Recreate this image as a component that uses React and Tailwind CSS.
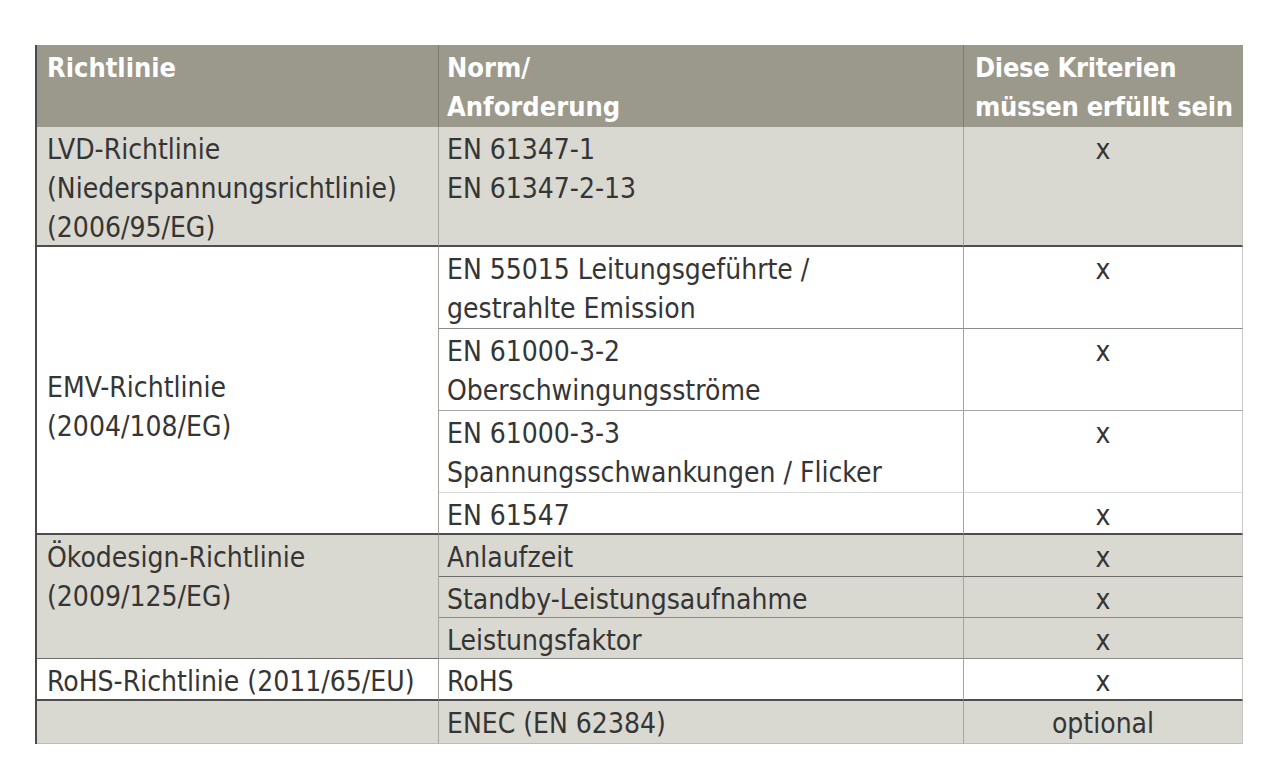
const font = { fontFamily: '"Liberation Sans Narrow", "DejaVu Sans Condensed", "Liberation Sans", sans-serif' };

const head = 'pt-[3px] leading-[39px] text-[27px] bg-[#9b988c] font-semibold text-white';
const cell = 'pt-[3px] leading-[39px] text-[28px]';

export default function App() {
  return (
    <div className="min-h-screen bg-white pt-[45px] pl-[35px] text-[#353535]" style={font}>
      <div className="grid w-[1208px] grid-cols-[402px_525px_279px] grid-rows-[82px_120px_82px_82px_82px_42px_42px_41px_41px_42px_43px] border-l-2 border-[#4a4a4a]">
        {/* header */}
        <div className={`${head} pl-[10px] border-r border-[#7d7a70]`}>Richtlinie</div>
        <div className={`${head} pl-[8px] border-r border-[#7d7a70]`}>
          Norm/
          <br />
          Anforderung
        </div>
        <div className={`${head} pl-[11px] tracking-[-0.3px]`}>
          Diese Kriterien
          <br />
          müssen erfüllt sein
        </div>

        {/* LVD */}
        <div className={`${cell} bg-[#d9d8d1] pl-[10px] border-r border-b-2 border-r-[#a5a5a0] border-b-[#4d4d4d]`}>
          LVD-Richtlinie
          <br />
          (Niederspannungsrichtlinie)
          <br />
          (2006/95/EG)
        </div>
        <div className={`${cell} bg-[#d9d8d1] pl-[8px] border-r border-b-2 border-r-[#a5a5a0] border-b-[#4d4d4d]`}>
          EN 61347-1
          <br />
          EN 61347-2-13
        </div>
        <div className={`${cell} bg-[#d9d8d1] text-center border-r border-b-2 border-r-[#c8c8c8] border-b-[#4d4d4d]`}>x</div>

        {/* EMV */}
        <div className={`${cell} row-span-4 pt-[121px] pl-[10px] bg-white border-r border-b-2 border-r-[#a5a5a0] border-b-[#4d4d4d]`}>
          EMV-Richtlinie
          <br />
          (2004/108/EG)
        </div>
        <div className={`${cell} pl-[8px] border-r border-b border-r-[#a5a5a0] border-b-[#8a8a8a]`}>
          EN 55015 Leitungsgeführte /
          <br />
          gestrahlte Emission
        </div>
        <div className={`${cell} text-center border-r border-b border-r-[#c8c8c8] border-b-[#8a8a8a]`}>x</div>
        <div className={`${cell} pl-[8px] border-r border-b border-r-[#a5a5a0] border-b-[#a5a5a5]`}>
          EN 61000-3-2
          <br />
          Oberschwingungsströme
        </div>
        <div className={`${cell} text-center border-r border-b border-r-[#c8c8c8] border-b-[#a5a5a5]`}>x</div>
        <div className={`${cell} pl-[8px] border-r border-b border-r-[#a5a5a0] border-b-[#dadada]`}>
          EN 61000-3-3
          <br />
          Spannungsschwankungen / Flicker
        </div>
        <div className={`${cell} text-center border-r border-b border-r-[#c8c8c8] border-b-[#dadada]`}>x</div>
        <div className={`${cell} pl-[8px] border-r border-b-2 border-r-[#a5a5a0] border-b-[#4d4d4d]`}>EN 61547</div>
        <div className={`${cell} text-center border-r border-b-2 border-r-[#c8c8c8] border-b-[#4d4d4d]`}>x</div>

        {/* Ökodesign */}
        <div className={`${cell} row-span-3 bg-[#d9d8d1] pl-[10px] border-r border-b border-r-[#a5a5a0] border-b-[#6e6e6e]`}>
          Ökodesign-Richtlinie
          <br />
          (2009/125/EG)
        </div>
        <div className={`${cell} bg-[#d9d8d1] pl-[8px] border-r border-b border-r-[#a5a5a0] border-b-[#6e6e6e]`}>Anlaufzeit</div>
        <div className={`${cell} bg-[#d9d8d1] text-center border-r border-b border-r-[#c8c8c8] border-b-[#6e6e6e]`}>x</div>
        <div className={`${cell} bg-[#d9d8d1] pl-[8px] border-r border-b border-r-[#a5a5a0] border-b-[#8a8a8a]`}>Standby-Leistungsaufnahme</div>
        <div className={`${cell} bg-[#d9d8d1] text-center border-r border-b border-r-[#c8c8c8] border-b-[#8a8a8a]`}>x</div>
        <div className={`${cell} bg-[#d9d8d1] pl-[8px] border-r border-b border-r-[#a5a5a0] border-b-[#8a8a8a]`}>Leistungsfaktor</div>
        <div className={`${cell} bg-[#d9d8d1] text-center border-r border-b border-r-[#c8c8c8] border-b-[#8a8a8a]`}>x</div>

        {/* RoHS */}
        <div className={`${cell} pl-[10px] border-r border-b-2 border-r-[#a5a5a0] border-b-[#4d4d4d]`}>RoHS-Richtlinie (2011/65/EU)</div>
        <div className={`${cell} pl-[8px] border-r border-b-2 border-r-[#a5a5a0] border-b-[#4d4d4d]`}>RoHS</div>
        <div className={`${cell} text-center border-r border-b-2 border-r-[#c8c8c8] border-b-[#4d4d4d]`}>x</div>

        {/* ENEC */}
        <div className={`${cell} bg-[#d9d8d1] border-r border-b border-r-[#a5a5a0] border-b-[#bdbdb8]`}></div>
        <div className={`${cell} bg-[#d9d8d1] pl-[8px] border-r border-b border-r-[#a5a5a0] border-b-[#bdbdb8]`}>ENEC (EN 62384)</div>
        <div className={`${cell} bg-[#d9d8d1] text-center border-r border-b border-r-[#c8c8c8] border-b-[#bdbdb8]`}>optional</div>
      </div>
    </div>
  );
}
